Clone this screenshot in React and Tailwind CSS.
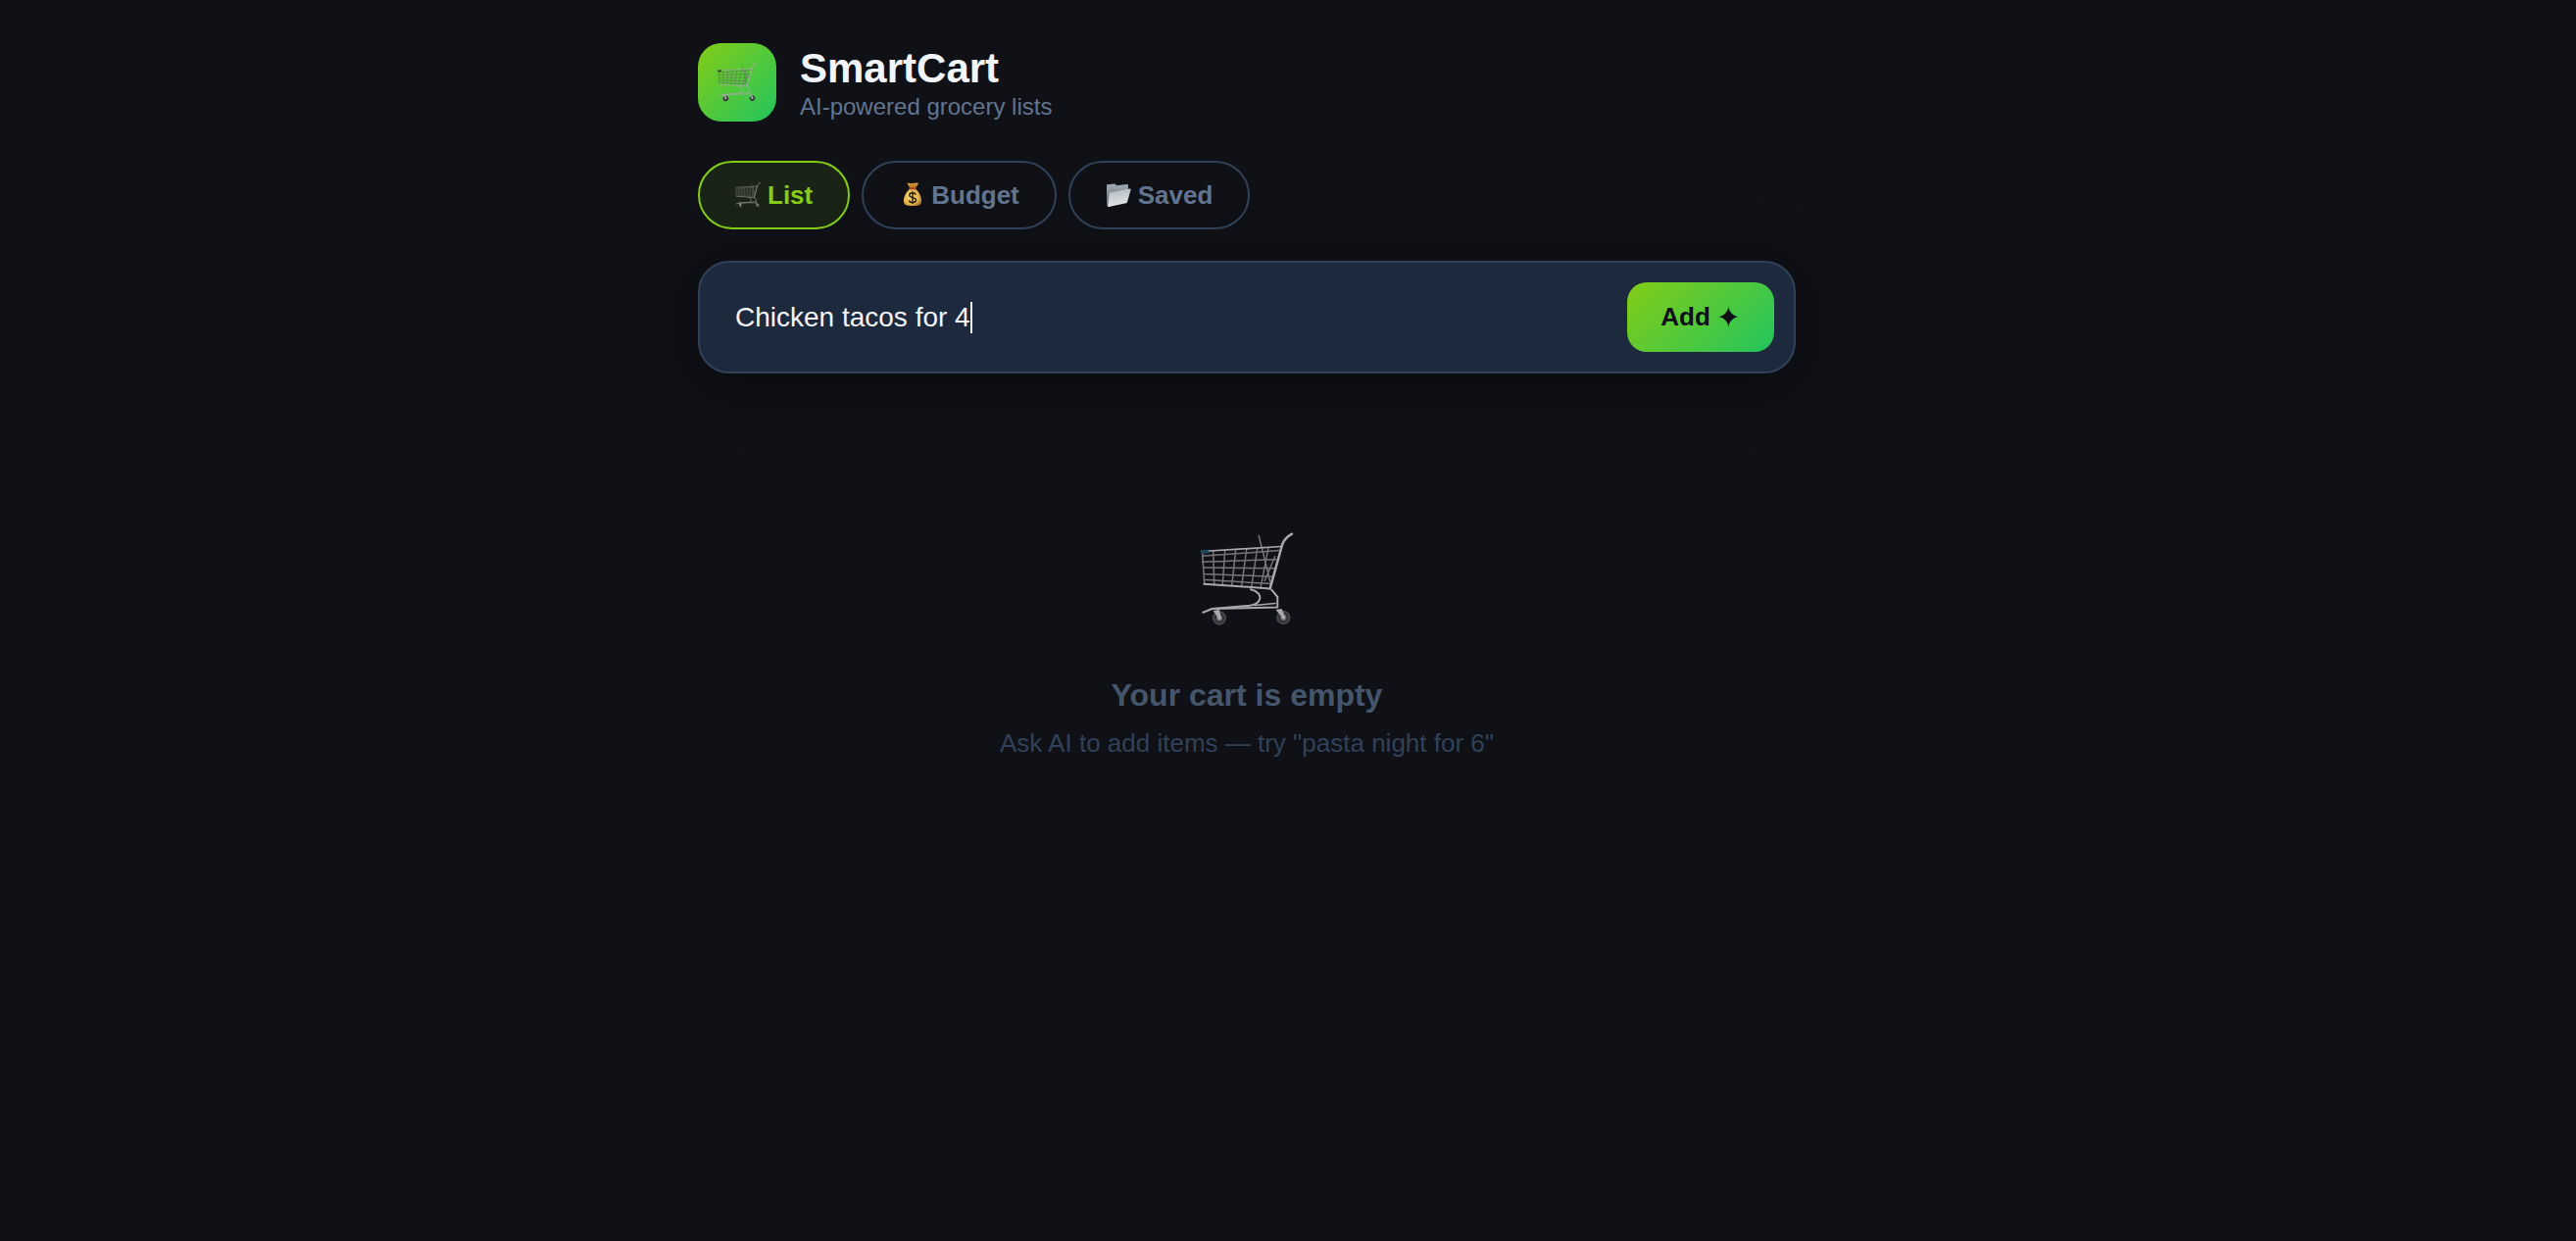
import { useId, useState } from "react";

const basketLines = [
  "M2 24.3 81.3 18.6",
  "M2 30.2 78.5 27.7",
  "M2.7 36 76.7 36.7",
  "M3.3 42.5 74.5 45.2",
  "M4 48.3 73.3 52.6",
  "M2.7 21 4.7 53",
  "M13.7 19.3 14.7 53",
  "M25.7 18.3 23.3 53.8",
  "M36.7 17.7 32.7 54.8",
  "M47.7 17 42.7 55.4",
  "M58.7 16.3 52.7 56",
  "M70 15.7 62 56.8",
  "M60 2.7 72 51",
  "M77 24 66 50",
];

function Wheel({ cx, cy }) {
  return (
    <g>
      <circle cx={cx} cy={cy} r="6" fill="#2b2b2d" stroke="#454547" strokeWidth="2.4" />
      <circle cx={cx} cy={cy} r="3.2" fill="#6d6d70" />
      <circle cx={cx} cy={cy} r="1.3" fill="#d4d4d6" />
    </g>
  );
}

function CartIcon({ className, mesh, frame, tip }) {
  return (
    <svg viewBox="0 0 96 96" fill="none" aria-hidden="true" className={className}>
      <path d={basketLines.join("")} stroke={mesh} strokeWidth="1.5" />
      <g stroke={frame} strokeLinecap="round" strokeLinejoin="round">
        <path d="M2 19.500 82.700 14.500" strokeWidth="1.7" />
        <path d="M4.3 52.700 71.700 57.400" strokeWidth="2" />
        <path d="M94 1.700C90 4 86 7.500 84.300 12L71.700 57.400" strokeWidth="2.500" />
        <path d="M52 58.300C59 60 62 64 61.300 67.500 60.500 71 57 74 51 74.700L12.700 78" strokeWidth="2" />
        <path d="M73.300 58.700 79.300 66V76.500L12.700 78 3.300 81.700" strokeWidth="2" />
        <path d="M56 74.500 77 72.500" strokeWidth="1.500" />
      </g>
      <path d="M1.300 18 9 17.700v3.800l-7.700.5z" fill={tip} />
      <Wheel cx={20} cy={87.5} />
      <Wheel cx={85.3} cy={87} />
      <path d="m13.500 80 6.500-1 1.800 8.200-2.600.8zM77.500 79l6.200-1 3.400 8.600-2.600.9z" fill={frame} />
    </svg>
  );
}

function MoneyBagIcon({ className }) {
  const id = useId();
  return (
    <svg viewBox="0 0 26 26" fill="none" aria-hidden="true" className={className}>
      <defs>
        <radialGradient id={id} cx="0.4" cy="0.45" r="0.65">
          <stop offset="0" stopColor="#fbdc7a" />
          <stop offset="0.7" stopColor="#e3b04c" />
          <stop offset="1" stopColor="#a8792c" />
        </radialGradient>
      </defs>
      <g transform="translate(1 -0.500)">
        <path d="M7.500 1.400c2-.6 3 .5 5.500.2s4-1 6-.2c-.6 2-2.200 3-3 5h-5.500c-.8-2-2.400-3-3-5z" fill="#d99a3a" />
        <path d="M10 2.500 12 6.200M13.500 2.500v3.700M16.500 2.500 15 6.200" stroke="#8f5a17" strokeWidth="0.8" />
        <path d="M10.300 7.200h5.600c3.400 2.600 6.200 7.600 6.200 12 0 4.200-2 5.300-9.100 5.300s-9.100-1.100-9.100-5.300c0-4.400 3-9.400 6.400-12z" fill={`url(#${id})`} />
        <rect x="9.300" y="5.800" width="7.500" height="1.900" rx="0.9" fill="#9c4a22" />
        <path d="M16.200 13.300c-.4-1.300-1.500-2-3.200-2-1.900 0-3.200.9-3.200 2.400 0 3.300 6.700 1.500 6.700 4.900 0 1.600-1.400 2.500-3.500 2.500-1.900 0-3.200-.8-3.500-2.300M13 9.800v12.800" stroke="#2c2010" strokeWidth="1.400" />
      </g>
    </svg>
  );
}

function FolderIcon({ className }) {
  const id = useId();
  return (
    <svg viewBox="0 0 26 26" fill="none" aria-hidden="true" className={className}>
      <defs>
        <linearGradient id={`${id}b`} x1="0" y1="0" x2="0" y2="1">
          <stop offset="0" stopColor="#a3adb5" />
          <stop offset="1" stopColor="#59636d" />
        </linearGradient>
        <linearGradient id={`${id}f`} x1="0.3" y1="0" x2="0.5" y2="1">
          <stop offset="0" stopColor="#b4bcc2" />
          <stop offset="1" stopColor="#e3e6e7" />
        </linearGradient>
      </defs>
      <path d="M1 3.400c0-.7.400-1 1-1.100l7.200-.7c.6 0 .9.200 1.200.8l.5.900 11-1.300c.7 0 1.100.3 1.100.9V16L2.500 24.500 1 23z" fill={`url(#${id}b)`} />
      <path d="M4.600 10.500 24.600 6.600c.8-.1 1.200.3 1 1.100L22 20.200c-.2.700-.6 1-1.200 1.100L3.200 25c-.9.200-1.300-.2-1.100-1.100l1.500-12.300c.1-.7.400-1 1-1.100z" fill={`url(#${id}f)`} />
    </svg>
  );
}

const tabs = [
  {
    label: "List",
    icon: <CartIcon className="size-[26px]" mesh="#6c7068" frame="#a5a8a0" tip="#34403c" />,
  },
  { label: "Budget", icon: <MoneyBagIcon className="size-[26px]" /> },
  { label: "Saved", icon: <FolderIcon className="size-[26px]" /> },
];

function Tab({ label, icon, active, onClick }) {
  return (
    <button
      type="button"
      aria-pressed={active}
      onClick={onClick}
      className={
        "flex items-center gap-[7px] rounded-full border-2 px-9 py-[18px] text-[26px] leading-[30px] font-bold " +
        (active
          ? "border-[#84cc16] bg-[#84cc16]/10 text-[#84cc16]"
          : "border-slate-700 text-slate-500")
      }
    >
      {icon}
      {label}
    </button>
  );
}

export default function App() {
  const [activeTab, setActiveTab] = useState("List");
  const [query, setQuery] = useState("Chicken tacos for 4");

  return (
    <div className="min-h-screen bg-[#0f1117] pr-[84px] font-['Liberation_Sans','DejaVu_Sans',sans-serif]">
      <div className="mx-auto max-w-[1120px] pt-11">
        <header className="flex items-center gap-6">
          <div className="flex size-20 items-center justify-center rounded-3xl bg-[linear-gradient(135deg,#84cc16,#22c55e)]">
            <CartIcon className="size-10" mesh="#5d7a55" frame="#a3a8a0" tip="#1d2b24" />
          </div>
          <div>
            <h1 className="text-[42px] leading-[50px] font-bold text-slate-100">SmartCart</h1>
            <p className="text-2xl leading-[28px] text-slate-500">AI-powered grocery lists</p>
          </div>
        </header>

        <nav className="mt-10 flex gap-3">
          {tabs.map((tab) => (
            <Tab
              key={tab.label}
              {...tab}
              active={tab.label === activeTab}
              onClick={() => setActiveTab(tab.label)}
            />
          ))}
        </nav>

        <main>
          <form
            onSubmit={(event) => event.preventDefault()}
            className="mt-8 flex items-center rounded-[32px] border-2 border-slate-700 bg-slate-800 p-5 shadow-[0_8px_64px_rgba(0,0,0,0.4)]"
          >
            <label className="flex flex-1 cursor-text items-center pl-4">
              <input
                type="text"
                aria-label="Ask AI to add items"
                value={query}
                onChange={(event) => setQuery(event.target.value)}
                className="[field-sizing:content] bg-transparent text-[28px] leading-8 text-slate-100 caret-transparent outline-none"
              />
              <span className="h-8 w-0.5 bg-slate-100" />
            </label>
            <button
              type="submit"
              className="flex items-center gap-1.5 rounded-[20px] bg-[linear-gradient(135deg,#84cc16,#22c55e)] px-[34px] py-5 text-[26px] leading-[31px] font-bold text-[#0f1117]"
            >
              Add <span className="text-[30px]">✦</span>
            </button>
          </form>

          <section className="flex flex-col items-center pt-[162px] text-center">
            <CartIcon className="size-24" mesh="#77777a" frame="#a9a9ac" tip="#1c4a5c" />
            <h2 className="mt-[52px] text-[32px] leading-9 font-bold text-slate-600">
              Your cart is empty
            </h2>
            <p className="mt-4 text-[26px] leading-[30px] text-slate-700">
              Ask AI to add items — try "pasta night for 6"
            </p>
          </section>
        </main>
      </div>
    </div>
  );
}
